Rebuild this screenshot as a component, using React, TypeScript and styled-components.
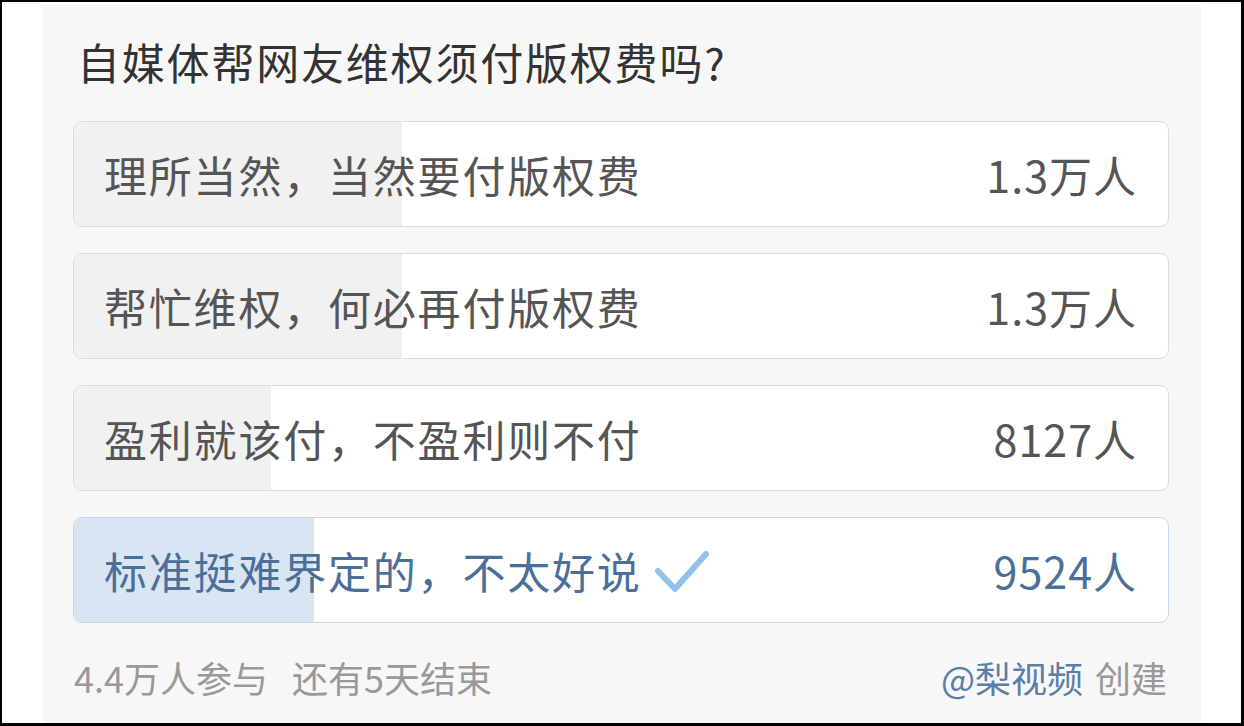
import React from "react";
import styled, { createGlobalStyle } from "styled-components";

const GlobalStyle = createGlobalStyle`
  html, body {
    margin: 0;
    padding: 0;
    background: #fff;
  }
  * {
    box-sizing: border-box;
  }
`;

const Frame = styled.div`
  width: 1244px;
  height: 726px;
  border-style: solid;
  border-color: #000;
  border-width: 2px 3px 3px 2px;
  background: #fff;
  padding: 5px 40px 0 41px;
  overflow: hidden;
  font-family: "Noto Sans CJK SC", "Noto Sans", sans-serif;
`;

const Panel = styled.div`
  height: 100%;
  background: #f7f7f7;
  padding: 29px 32px 0 30px;
  display: flex;
  flex-direction: column;
`;

const Title = styled.h1`
  margin: 0 0 35px 4px;
  font-size: 43px;
  line-height: 50px;
  font-weight: 400;
  letter-spacing: 1.8px;
  color: #333;
`;

const Options = styled.div`
  display: flex;
  flex-direction: column;
  gap: 26px;
`;

const Option = styled.div<{ $selected?: boolean }>`
  position: relative;
  height: 106px;
  border: 1px solid ${(p) => (p.$selected ? "#c6d7ea" : "#dcdcdc")};
  border-radius: 9px;
  background: #fff;
  overflow: hidden;
  display: flex;
  align-items: center;
  justify-content: space-between;
  padding: 0 31px 0 30px;
  color: ${(p) => (p.$selected ? "#4b6f98" : "#555")};
  font-size: 43px;
`;

const Fill = styled.div<{ $selected?: boolean }>`
  position: absolute;
  left: 0;
  top: 0;
  bottom: 0;
  background: ${(p) => (p.$selected ? "#d8e5f2" : "#f1f1f1")};
`;

const Label = styled.span`
  position: relative;
  display: flex;
  align-items: center;
  gap: 12px;
  letter-spacing: 1.8px;
`;

const Count = styled.span`
  position: relative;
  letter-spacing: 1px;
`;

const Footer = styled.div`
  margin-top: 32px;
  display: flex;
  justify-content: space-between;
  align-items: center;
  font-size: 36px;
  line-height: 44px;
  color: #999;
  padding: 0 2px 0 1px;
`;

const Stats = styled.div`
  display: flex;
  gap: 24px;
`;

const Author = styled.span`
  color: #5a7ea8;
  margin-right: 12px;
`;

const Check = () => (
  <svg width="56" height="44" viewBox="0 0 56 44" style={{ marginTop: 4 }}>
    <path
      d="M4 21 L21 39 L52 4"
      fill="none"
      stroke="#8fc2ec"
      strokeWidth="6"
      strokeLinecap="round"
      strokeLinejoin="round"
    />
  </svg>
);

const options = [
  { label: "理所当然，当然要付版权费", count: "1.3万人", pct: 30 },
  { label: "帮忙维权，何必再付版权费", count: "1.3万人", pct: 30 },
  { label: "盈利就该付，不盈利则不付", count: "8127人", pct: 18 },
  { label: "标准挺难界定的，不太好说", count: "9524人", pct: 21.9, selected: true },
];

export default function App() {
  return (
    <>
      <GlobalStyle />
      <Frame>
        <Panel>
          <Title>自媒体帮网友维权须付版权费吗?</Title>
          <Options>
            {options.map((o) => (
              <Option key={o.label} $selected={o.selected}>
                <Fill $selected={o.selected} style={{ width: `${o.pct}%` }} />
                <Label>
                  {o.label}
                  {o.selected && <Check />}
                </Label>
                <Count>{o.count}</Count>
              </Option>
            ))}
          </Options>
          <Footer>
            <Stats>
              <span>4.4万人参与</span>
              <span>还有5天结束</span>
            </Stats>
            <div>
              <Author>@梨视频</Author>创建
            </div>
          </Footer>
        </Panel>
      </Frame>
    </>
  );
}
